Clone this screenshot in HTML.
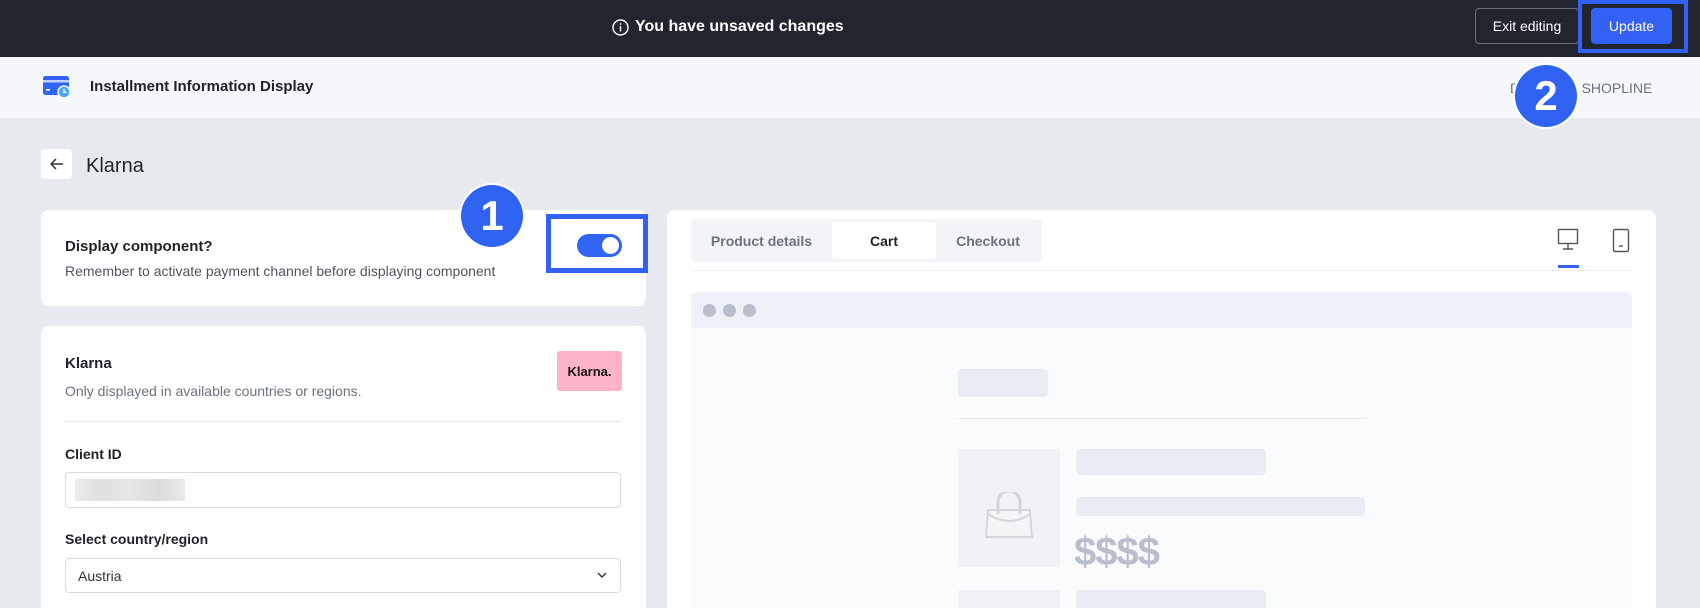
<!DOCTYPE html>
<html style="width:1700px;height:608px;overflow:hidden"><head><meta charset="utf-8"><style>
*{box-sizing:border-box;margin:0;padding:0}
body{width:1700px;height:608px;overflow:hidden;background:#e6e9ee;font-family:"Liberation Sans",Arial,sans-serif;position:relative;color:#1f2329}
.a{position:absolute}
.top{left:0;top:0;width:1700px;height:57px;background:#22252f}
.hdr{left:0;top:57px;width:1700px;height:61px;background:#f5f7fa}
.card{background:#fff;border-radius:8px}
.b{font-weight:bold}
.badge{width:62px;height:62px;border-radius:50%;background:#2f62f0;color:#fff;font-size:42px;font-weight:bold;display:flex;align-items:center;justify-content:center;box-shadow:0 0 0 2px #fff}
.sk{background:#e8edf4;border-radius:4px}
</style></head><body>
<div class="a top"></div>
<div class="a" style="left:612px;top:17px;height:20px;display:flex;align-items:center;color:#fff;font-size:16px;font-weight:bold;gap:6px">
<svg width="17" height="17" viewBox="0 0 17 17"><circle cx="8.5" cy="8.5" r="7.5" fill="none" stroke="#fff" stroke-width="1.4"/><rect x="7.8" y="7" width="1.4" height="5.5" fill="#fff"/><circle cx="8.5" cy="5" r="0.9" fill="#fff"/></svg>You have unsaved changes</div>
<div class="a" style="left:1475px;top:8px;width:104px;height:36px;border:1px solid #6b6f78;border-radius:4px;color:#fff;font-size:14px;display:flex;align-items:center;justify-content:center">Exit editing</div>
<div class="a" style="left:1578px;top:0;width:110px;height:53px;border:4px solid #3461f5"></div>
<div class="a" style="left:1591px;top:8px;width:81px;height:36px;background:#3461f5;border-radius:4px;color:#fff;font-size:14px;display:flex;align-items:center;justify-content:center">Update</div>

<div class="a hdr"></div>
<svg class="a" style="left:43px;top:76px" width="28" height="22" viewBox="0 0 28 22"><rect x="0" y="0" width="26" height="19" rx="2.5" fill="#3164f4"/><rect x="0" y="4" width="26" height="2.5" fill="#fff" opacity=".7"/><rect x="3" y="13" width="4" height="1.6" fill="#fff"/><circle cx="21" cy="16" r="6" fill="#4aa8ff" stroke="#fff" stroke-width="1.4"/><path d="M21 13v3.3h2.4" stroke="#fff" stroke-width="1.3" fill="none"/></svg>
<div class="a b" style="left:90px;top:78px;font-size:15px">Installment Information Display</div>
<div class="a" style="left:1510px;top:80px;font-size:14px;color:#6b7280">Developer: SHOPLINE</div>
<div class="a badge" style="left:1515px;top:65px">2</div>

<div class="a card" style="left:41px;top:149px;width:31px;height:30px;border-radius:4px;display:flex;align-items:center;justify-content:center"><svg width="14" height="12" viewBox="0 0 14 12"><path d="M13 6H1.5M6 1L1 6l5 5" stroke="#333" stroke-width="1.5" fill="none"/></svg></div>
<div class="a" style="left:86px;top:155px;font-size:20px">Klarna</div>

<div class="a card" style="left:41px;top:210px;width:605px;height:96px"></div>
<div class="a b" style="left:65px;top:238px;font-size:15px">Display component?</div>
<div class="a" style="left:65px;top:263px;font-size:14px;color:#4e5461">Remember to activate payment channel before displaying component</div>
<div class="a badge" style="left:461px;top:185px">1</div>
<div class="a" style="left:546px;top:214px;width:102px;height:59px;border:5px solid #3461f5"></div>
<div class="a" style="left:577px;top:234px;width:45px;height:23px;border-radius:12px;background:#3164f4"><div class="a" style="right:3px;top:3px;width:17px;height:17px;border-radius:50%;background:#fff"></div></div>

<div class="a" style="left:41px;top:326px;width:605px;height:282px;background:#fff;border-radius:8px 8px 0 0"></div>
<div class="a b" style="left:65px;top:355px;font-size:15px">Klarna</div>
<div class="a" style="left:65px;top:383px;font-size:14px;color:#6b7280">Only displayed in available countries or regions.</div>
<div class="a" style="left:557px;top:351px;width:65px;height:40px;background:#ffb3c7;border-radius:3px;display:flex;align-items:center;justify-content:center;font-weight:bold;font-size:13px;color:#17120f">Klarna.</div>
<div class="a" style="left:65px;top:421px;width:556px;height:1px;background:#e6e8eb"></div>
<div class="a b" style="left:65px;top:446px;font-size:14px">Client ID</div>
<div class="a" style="left:65px;top:472px;width:556px;height:36px;border:1px solid #d7dae0;border-radius:4px"></div>
<div class="a" style="left:75px;top:479px;width:110px;height:22px;background:linear-gradient(90deg,#e9e9ea,#dcdcde,#e5e5e6,#d8d8da,#e7e7e8);opacity:.9"></div>
<div class="a b" style="left:65px;top:531px;font-size:14px">Select country/region</div>
<div class="a" style="left:65px;top:558px;width:556px;height:35px;border:1px solid #d7dae0;border-radius:4px"></div>
<div class="a" style="left:78px;top:568px;font-size:14px;color:#333">Austria</div>
<svg class="a" style="left:597px;top:572px" width="10" height="7" viewBox="0 0 10 7"><path d="M1 1l4 4 4-4" stroke="#333" stroke-width="1.4" fill="none"/></svg>

<div class="a" style="left:667px;top:210px;width:989px;height:398px;background:#fff;border-radius:8px 8px 0 0"></div>
<div class="a" style="left:691px;top:219px;width:351px;height:43px;background:#f3f4f7;border-radius:5px"></div>
<div class="a" style="left:832px;top:222px;width:104px;height:37px;background:#fff;border-radius:4px"></div>
<div class="a b" style="left:691px;top:233px;width:141px;text-align:center;font-size:14px;color:#6b7280">Product details</div>
<div class="a b" style="left:832px;top:233px;width:104px;text-align:center;font-size:14px">Cart</div>
<div class="a b" style="left:936px;top:233px;width:104px;text-align:center;font-size:14px;color:#6b7280">Checkout</div>
<div class="a" style="left:691px;top:270px;width:941px;height:1px;background:#eceef1"></div>
<svg class="a" style="left:1557px;top:228px" width="22" height="24" viewBox="0 0 22 24"><rect x="1.5" y="1.5" width="19" height="14" fill="none" stroke="#555" stroke-width="1.4"/><path d="M11 15.5v5M6 21h10" stroke="#555" stroke-width="1.4"/></svg>
<div class="a" style="left:1558px;top:265px;width:21px;height:3px;background:#3164f4"></div>
<svg class="a" style="left:1612px;top:228px" width="18" height="26" viewBox="0 0 18 26"><rect x="1.5" y="1.5" width="15" height="22" rx="1.5" fill="none" stroke="#555" stroke-width="1.4"/><path d="M7 18h4" stroke="#555" stroke-width="1.4"/></svg>

<div class="a" style="left:691px;top:292px;width:941px;height:316px;background:#fafbfd;border-radius:6px 6px 0 0"></div>
<div class="a" style="left:691px;top:292px;width:941px;height:36px;background:#eef1f7;border-radius:6px 6px 0 0"></div>
<div class="a" style="left:703px;top:304px;width:13px;height:13px;border-radius:50%;background:#b8bfcc"></div>
<div class="a" style="left:723px;top:304px;width:13px;height:13px;border-radius:50%;background:#b8bfcc"></div>
<div class="a" style="left:743px;top:304px;width:13px;height:13px;border-radius:50%;background:#b8bfcc"></div>
<div class="a sk" style="left:958px;top:369px;width:90px;height:28px"></div>
<div class="a" style="left:958px;top:418px;width:408px;height:1px;background:#e4e6ea"></div>
<div class="a" style="left:958px;top:449px;width:102px;height:118px;background:#f1f2f6"></div>
<svg class="a" style="left:982px;top:492px" width="54" height="48" viewBox="0 0 54 48"><path d="M6 18h42l2 27H4z" fill="#f4f5f7" stroke="#d4d6db" stroke-width="2"/><path d="M6 22q21 14 42 0" fill="none" stroke="#d4d6db" stroke-width="2"/><path d="M16 22V10a11 11 0 0 1 22 0v12" fill="none" stroke="#d4d6db" stroke-width="3"/></svg>
<div class="a sk" style="left:1076px;top:449px;width:190px;height:26px"></div>
<div class="a sk" style="left:1076px;top:497px;width:289px;height:19px"></div>
<div class="a b" style="left:1074px;top:530px;font-size:40px;color:#b8bfcc;letter-spacing:-1px">$$$$</div>
<div class="a" style="left:958px;top:590px;width:102px;height:18px;background:#f1f2f6"></div>
<div class="a" style="left:1076px;top:590px;width:190px;height:18px;background:#e8edf4;border-radius:4px 4px 0 0"></div>
</body></html>
